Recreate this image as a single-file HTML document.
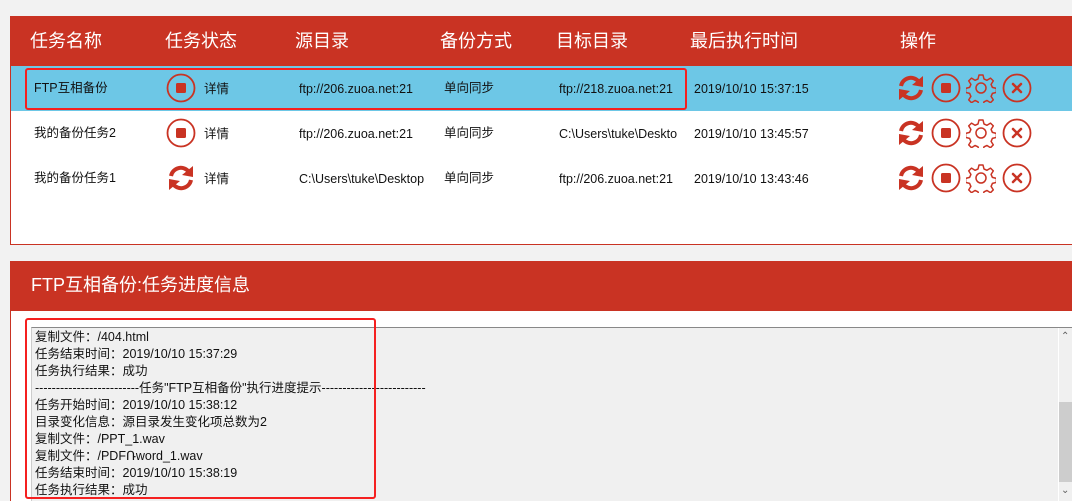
<!DOCTYPE html>
<html><head><meta charset="utf-8"><style>
*{margin:0;padding:0;box-sizing:border-box}
body{width:1072px;height:501px;background:#f2f2f2;font-family:"Liberation Sans","Noto Sans CJK SC",sans-serif;position:relative;overflow:hidden;color:#111}
.abs{position:absolute;white-space:nowrap}
.p1{position:absolute;left:10px;top:16px;width:1072px;height:229px;background:#fff;border-left:1px solid #c93323;border-bottom:1px solid #c93323}
.hdr{position:absolute;left:10px;top:16px;width:1072px;height:50px;background:#c93323}
.h{position:absolute;top:30px;color:#fff;font-size:18px;line-height:22px}
.row{position:absolute;left:11px;width:1061px;height:45px}
.c{position:absolute;font-size:12.5px;line-height:16px;white-space:nowrap;overflow:hidden}
svg{position:absolute}
.log{position:absolute;left:31px;top:327px;width:1041px;height:174px;background:#f0f0f0;border-top:1px solid #888;border-left:1px solid #ccc}
.log div{font-size:12.5px;line-height:17px;height:17px;white-space:nowrap;padding-left:3px}
</style></head><body>
<div class="p1"></div>
<div class="hdr"></div>
<div class="h" style="left:30px">任务名称</div>
<div class="h" style="left:165px">任务状态</div>
<div class="h" style="left:295px">源目录</div>
<div class="h" style="left:440px">备份方式</div>
<div class="h" style="left:556px">目标目录</div>
<div class="h" style="left:690px">最后执行时间</div>
<div class="h" style="left:900px">操作</div>

<div class="row" style="top:66px;background:#6dc7e6"></div>

<svg width="0" height="0"><defs>
<g id="stop"><circle cx="15" cy="15" r="13.5" fill="none" stroke="#c93323" stroke-width="1.8"/><rect x="10" y="10" width="10" height="10" rx="1.5" fill="#c93323"/></g>
<g id="ref"><path d="M5 13 A10 10 0 0 1 23 9" fill="none" stroke="#c93323" stroke-width="4"/><path d="M27 3 L27 14 L16 12 Z" fill="#c93323"/><path d="M25 17 A10 10 0 0 1 7 21" fill="none" stroke="#c93323" stroke-width="4"/><path d="M3 27 L3 16 L14 18 Z" fill="#c93323"/></g>
<g id="gear"><circle cx="15" cy="15" r="5" fill="none" stroke="#c93323" stroke-width="1.5"/><path d="M13 2h4l1 4 3 1.3 3.5-2.2 2.8 2.8-2.2 3.5 1.3 3 4 1v4l-4 1-1.3 3 2.2 3.5-2.8 2.8-3.5-2.2-3 1.3-1 4h-4l-1-4-3-1.3-3.5 2.2-2.8-2.8 2.2-3.5-1.3-3-4-1v-4l4-1 1.3-3-2.2-3.5 2.8-2.8 3.5 2.2 3-1.3z" fill="none" stroke="#c93323" stroke-width="1.5" stroke-linejoin="round"/></g>
<g id="x"><circle cx="15" cy="15" r="13.5" fill="none" stroke="#c93323" stroke-width="1.8"/><path d="M11 11l8 8M19 11l-8 8" stroke="#c93323" stroke-width="2.5" stroke-linecap="round"/></g>
</defs></svg>

<!-- row 1 -->
<div class="c" style="left:34px;top:80px">FTP互相备份</div>
<svg style="left:166px;top:73px" width="30" height="30"><use href="#stop"/></svg>
<div class="c" style="left:204px;top:81px">详情</div>
<div class="c" style="left:299px;top:81px">ftp://206.zuoa.net:21</div>
<div class="c" style="left:444px;top:80px">单向同步</div>
<div class="c" style="left:559px;top:81px;width:125px">ftp://218.zuoa.net:21</div>
<div class="c" style="left:694px;top:81px">2019/10/10 15:37:15</div>
<!-- row 2 -->
<div class="c" style="left:34px;top:125px">我的备份任务2</div>
<svg style="left:166px;top:118px" width="30" height="30"><use href="#stop"/></svg>
<div class="c" style="left:204px;top:126px">详情</div>
<div class="c" style="left:299px;top:126px">ftp://206.zuoa.net:21</div>
<div class="c" style="left:444px;top:125px">单向同步</div>
<div class="c" style="left:559px;top:126px;width:125px">C:\Users\tuke\Deskto</div>
<div class="c" style="left:694px;top:126px">2019/10/10 13:45:57</div>
<!-- row 3 -->
<div class="c" style="left:34px;top:170px">我的备份任务1</div>
<svg style="left:166px;top:163px" width="30" height="30"><use href="#ref"/></svg>
<div class="c" style="left:204px;top:171px">详情</div>
<div class="c" style="left:299px;top:171px">C:\Users\tuke\Desktop</div>
<div class="c" style="left:444px;top:170px">单向同步</div>
<div class="c" style="left:559px;top:171px;width:125px">ftp://206.zuoa.net:21</div>
<div class="c" style="left:694px;top:171px">2019/10/10 13:43:46</div>

<!-- action icons -->
<svg style="left:896px;top:73px" width="30" height="30"><use href="#ref"/></svg>
<svg style="left:931px;top:73px" width="30" height="30"><use href="#stop"/></svg>
<svg style="left:966px;top:73px" width="30" height="30"><use href="#gear"/></svg>
<svg style="left:1002px;top:73px" width="30" height="30"><use href="#x"/></svg>
<svg style="left:896px;top:118px" width="30" height="30"><use href="#ref"/></svg>
<svg style="left:931px;top:118px" width="30" height="30"><use href="#stop"/></svg>
<svg style="left:966px;top:118px" width="30" height="30"><use href="#gear"/></svg>
<svg style="left:1002px;top:118px" width="30" height="30"><use href="#x"/></svg>
<svg style="left:896px;top:163px" width="30" height="30"><use href="#ref"/></svg>
<svg style="left:931px;top:163px" width="30" height="30"><use href="#stop"/></svg>
<svg style="left:966px;top:163px" width="30" height="30"><use href="#gear"/></svg>
<svg style="left:1002px;top:163px" width="30" height="30"><use href="#x"/></svg>

<div class="abs" style="left:25px;top:68px;width:662px;height:42px;border:2px solid #f52020;border-radius:3px"></div>

<!-- panel 2 -->
<div class="abs" style="left:10px;top:261px;width:1062px;height:240px;background:#fff;border-left:1px solid #c93323"></div>
<div class="abs" style="left:10px;top:261px;width:1062px;height:50px;background:#c93323"></div>
<div class="abs" style="left:31px;top:274px;color:#fff;font-size:18px;line-height:22px">FTP互相备份:任务进度信息</div>
<div class="log">
<div style="margin-top:1px">复制文件：/404.html</div>
<div>任务结束时间：2019/10/10 15:37:29</div>
<div>任务执行结果：成功</div>
<div>-------------------------任务"FTP互相备份"执行进度提示-------------------------</div>
<div>任务开始时间：2019/10/10 15:38:12</div>
<div>目录变化信息：源目录发生变化项总数为2</div>
<div>复制文件：/PPT_1.wav</div>
<div>复制文件：/PDFՌword_1.wav</div>
<div>任务结束时间：2019/10/10 15:38:19</div>
<div>任务执行结果：成功</div>
</div>
<div class="abs" style="left:1058px;top:328px;width:14px;height:173px;background:#f0f0f0;border-left:1px solid #fff"></div>
<div class="abs" style="left:1059px;top:402px;width:13px;height:80px;background:#cdcdcd"></div>
<div class="abs" style="left:1061px;top:331px;font-size:10px;color:#606060">⌃</div>
<div class="abs" style="left:1061px;top:485px;font-size:10px;color:#606060">⌄</div>
<div class="abs" style="left:25px;top:318px;width:351px;height:181px;border:2px solid #f52020;border-radius:3px"></div>
</body></html>
